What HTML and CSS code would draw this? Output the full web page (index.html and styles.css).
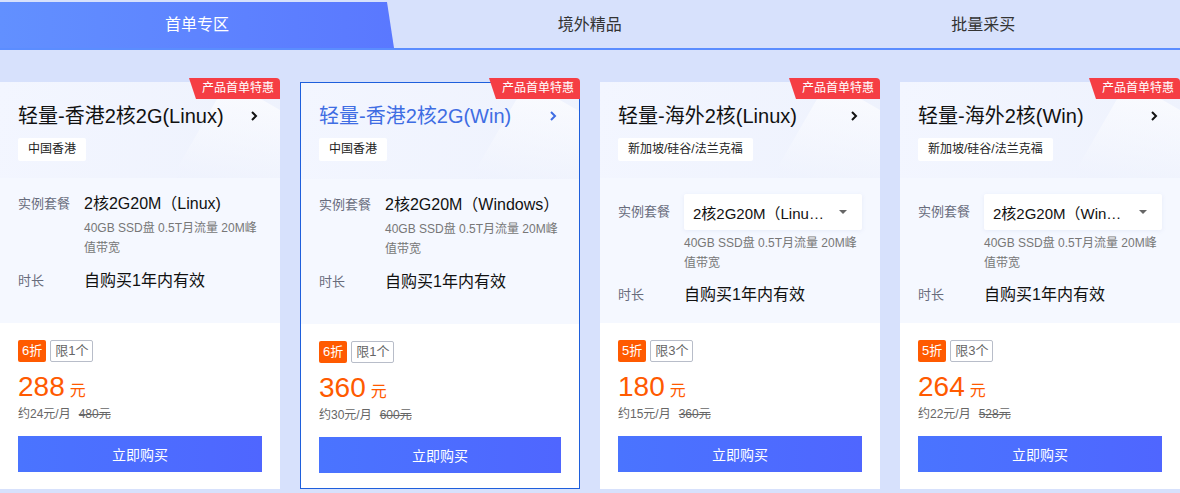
FILE: index.html
```html
<!DOCTYPE html>
<html lang="zh-CN">

<head>
    <meta charset="UTF-8" />
    <meta name="viewport" content="width=device-width, initial-scale=1.0" />
    <title>首单专区</title>
    <link rel="stylesheet" href="styles.css">
</head>

<body>

    <nav class="tabs">
        <div class="tab active">首单专区</div>
        <div class="tab">境外精品</div>
        <div class="tab">批量采买</div>
    </nav>

    <section class="cards">

        <div class="card">
            <span class="corner">产品首单特惠</span>
            <div class="card-head">
                <div class="title">
                    <span>轻量-香港2核2G(Linux)</span>
                    <svg class="chev" width="8" height="12" viewBox="0 0 8 12"><polyline points="2,2 6,6 2,10" fill="none" stroke="currentColor" stroke-width="2"/></svg>
                </div>
                <span class="tag">中国香港</span>
            </div>
            <div class="card-body">
                <div class="row">
                    <span class="label">实例套餐</span>
                    <div class="value">
                        <div class="spec">2核2G20M（Linux)</div>
                        <p class="desc">40GB SSD盘 0.5T月流量 20M峰值带宽</p>
                    </div>
                </div>
                <div class="row row-time">
                    <span class="label">时长</span>
                    <div class="spec">自购买1年内有效</div>
                </div>
            </div>
            <div class="card-foot">
                <div class="marks"><span class="off">6折</span><span class="limit">限1个</span></div>
                <div class="price">288<small>元</small></div>
                <div class="sub">约24元/月<s>480元</s></div>
                <button class="buy">立即购买</button>
            </div>
        </div>

        <div class="card selected">
            <span class="corner">产品首单特惠</span>
            <div class="card-head">
                <div class="title">
                    <span>轻量-香港2核2G(Win)</span>
                    <svg class="chev" width="8" height="12" viewBox="0 0 8 12"><polyline points="2,2 6,6 2,10" fill="none" stroke="currentColor" stroke-width="2"/></svg>
                </div>
                <span class="tag">中国香港</span>
            </div>
            <div class="card-body">
                <div class="row">
                    <span class="label">实例套餐</span>
                    <div class="value">
                        <div class="spec">2核2G20M（Windows）</div>
                        <p class="desc">40GB SSD盘 0.5T月流量 20M峰值带宽</p>
                    </div>
                </div>
                <div class="row row-time">
                    <span class="label">时长</span>
                    <div class="spec">自购买1年内有效</div>
                </div>
            </div>
            <div class="card-foot">
                <div class="marks"><span class="off">6折</span><span class="limit">限1个</span></div>
                <div class="price">360<small>元</small></div>
                <div class="sub">约30元/月<s>600元</s></div>
                <button class="buy">立即购买</button>
            </div>
        </div>

        <div class="card">
            <span class="corner">产品首单特惠</span>
            <div class="card-head">
                <div class="title">
                    <span>轻量-海外2核(Linux)</span>
                    <svg class="chev" width="8" height="12" viewBox="0 0 8 12"><polyline points="2,2 6,6 2,10" fill="none" stroke="currentColor" stroke-width="2"/></svg>
                </div>
                <span class="tag">新加坡/硅谷/法兰克福</span>
            </div>
            <div class="card-body">
                <div class="row row-select">
                    <span class="label">实例套餐</span>
                    <div class="value">
                        <div class="select" title="2核2G20M（Linux)"><span>2核2G20M（Linu…</span><i class="caret"></i></div>
                        <p class="desc">40GB SSD盘 0.5T月流量 20M峰值带宽</p>
                    </div>
                </div>
                <div class="row row-time">
                    <span class="label">时长</span>
                    <div class="spec">自购买1年内有效</div>
                </div>
            </div>
            <div class="card-foot">
                <div class="marks"><span class="off">5折</span><span class="limit">限3个</span></div>
                <div class="price">180<small>元</small></div>
                <div class="sub">约15元/月<s>360元</s></div>
                <button class="buy">立即购买</button>
            </div>
        </div>

        <div class="card">
            <span class="corner">产品首单特惠</span>
            <div class="card-head">
                <div class="title">
                    <span>轻量-海外2核(Win)</span>
                    <svg class="chev" width="8" height="12" viewBox="0 0 8 12"><polyline points="2,2 6,6 2,10" fill="none" stroke="currentColor" stroke-width="2"/></svg>
                </div>
                <span class="tag">新加坡/硅谷/法兰克福</span>
            </div>
            <div class="card-body">
                <div class="row row-select">
                    <span class="label">实例套餐</span>
                    <div class="value">
                        <div class="select" title="2核2G20M（Windows）"><span>2核2G20M（Win…</span><i class="caret"></i></div>
                        <p class="desc">40GB SSD盘 0.5T月流量 20M峰值带宽</p>
                    </div>
                </div>
                <div class="row row-time">
                    <span class="label">时长</span>
                    <div class="spec">自购买1年内有效</div>
                </div>
            </div>
            <div class="card-foot">
                <div class="marks"><span class="off">5折</span><span class="limit">限3个</span></div>
                <div class="price">264<small>元</small></div>
                <div class="sub">约22元/月<s>528元</s></div>
                <button class="buy">立即购买</button>
            </div>
        </div>

    </section>

</body>

</html>
```

FILE: styles.css
```css
* {
    margin: 0;
    padding: 0;
    box-sizing: border-box;
}

body {
    font-family: "Liberation Sans", "Noto Sans CJK SC", sans-serif;
    background: #d7e1fc;
    color: #000;
    overflow: hidden;
}

/* tabs */
.tabs {
    display: flex;
    padding-top: 2px;
    border-bottom: 2px solid #5b8dff;
}

.tab {
    flex: 1;
    height: 46px;
    line-height: 46px;
    text-align: center;
    font-size: 16px;
    color: #333;
}

.tab.active {
    flex: 0 0 394px;
    margin-right: -1px;
    color: #fff;
    background: linear-gradient(90deg, #6290ff 0%, #5a78ff 100%);
    clip-path: polygon(0 0, calc(100% - 7px) 0, 100% 100%, 0 100%);
}

/* cards */
.cards {
    display: grid;
    grid-template-columns: repeat(4, 280px);
    gap: 20px;
    margin-top: 32px;
}

.card {
    position: relative;
    background: #fff;
    height: 407px;
}

.card.selected {
    border: 1px solid #1e5fdc;
}

.corner {
    position: absolute;
    top: -4px;
    right: 0;
    height: 21px;
    line-height: 21px;
    padding: 0 6px 0 13px;
    font-size: 12px;
    color: #fff;
    background: #f53e44;
    border-top-right-radius: 4px;
    clip-path: polygon(0 0, 100% 0, 100% 100%, 7px 100%);
    z-index: 2;
}

.card.selected .corner {
    top: -5px;
    right: -1px;
}

.card-head {
    position: relative;
    height: 96px;
    padding: 22px 18px 0;
    background: linear-gradient(100deg, #f3f6ff 0%, #eef2fd 100%);
    overflow: hidden;
}

.card-head::after {
    content: "";
    position: absolute;
    right: -30px;
    top: 20px;
    width: 120px;
    height: 120px;
    border-radius: 24px;
    background: linear-gradient(160deg, rgba(255, 255, 255, 0.7), rgba(225, 232, 252, 0.4));
    transform: rotate(30deg);
}

.title {
    position: relative;
    z-index: 1;
    display: flex;
    justify-content: space-between;
    align-items: center;
    font-size: 20px;
    line-height: 24px;
    color: #111;
}

.selected .title {
    color: #3f6de3;
    margin-top: -1px;
}

.chev {
    margin-right: 4px;
}

.tag {
    position: relative;
    z-index: 1;
    display: inline-block;
    margin-top: 10px;
    height: 23px;
    line-height: 23px;
    padding: 0 10px;
    font-size: 12px;
    color: #222;
    background: #fff;
    border-radius: 2px;
}

.card-body {
    height: 145px;
    padding: 15px 18px 0;
    background: #f5f8ff;
}

.row {
    display: flex;
}

.label {
    flex: 0 0 66px;
    font-size: 13px;
    line-height: 22px;
    color: #686c7c;
}

.value {
    flex: 1;
}

.spec {
    font-size: 16px;
    line-height: 22px;
    color: #111;
}

.desc {
    margin-top: 3px;
    font-size: 12px;
    line-height: 20px;
    color: #777;
}

.row-time {
    margin-top: 12px;
}

.row-select .label {
    line-height: 36px;
}

.card-body:has(.row-select) {
    padding-top: 16px;
}

.select {
    display: flex;
    align-items: center;
    width: 178px;
    height: 36px;
    padding: 0 15px 0 9px;
    background: #fff;
    border-radius: 2px;
    box-shadow: 0 1px 4px rgba(120, 140, 200, 0.12);
    font-size: 15px;
    color: #111;
}

.select span {
    flex: 1;
    white-space: nowrap;
    overflow: hidden;
}

.caret {
    border-left: 4px solid transparent;
    border-right: 4px solid transparent;
    border-top: 4px solid #666;
}

.row-select + .row-time {
    margin-top: 11px;
}

.card-foot {
    padding: 17px 18px;
}

.marks {
    display: flex;
    gap: 4px;
    height: 22px;
}

.off {
    padding: 0 4px;
    line-height: 22px;
    font-size: 13px;
    color: #fff;
    background: #ff5a00;
    border-radius: 2px;
}

.limit {
    padding: 0 4px;
    line-height: 20px;
    font-size: 13px;
    color: #666;
    border: 1px solid #b8bdc9;
    border-radius: 2px;
}

.price {
    height: 34px;
    margin-top: 8px;
    font-size: 28px;
    line-height: 34px;
    color: #ff5a00;
}

.price small {
    margin-left: 5px;
    font-size: 16px;
    line-height: 1;
}

.sub {
    height: 16px;
    margin-top: 2px;
    font-size: 12px;
    line-height: 16px;
    color: #666;
}

.sub s {
    margin-left: 8px;
}

.buy {
    display: block;
    width: 100%;
    height: 36px;
    margin-top: 14px;
    border: none;
    font-family: inherit;
    font-size: 14px;
    color: #fff;
    background: linear-gradient(90deg, #4a74ff 0%, #4f66ff 100%);
    cursor: pointer;
}
```
